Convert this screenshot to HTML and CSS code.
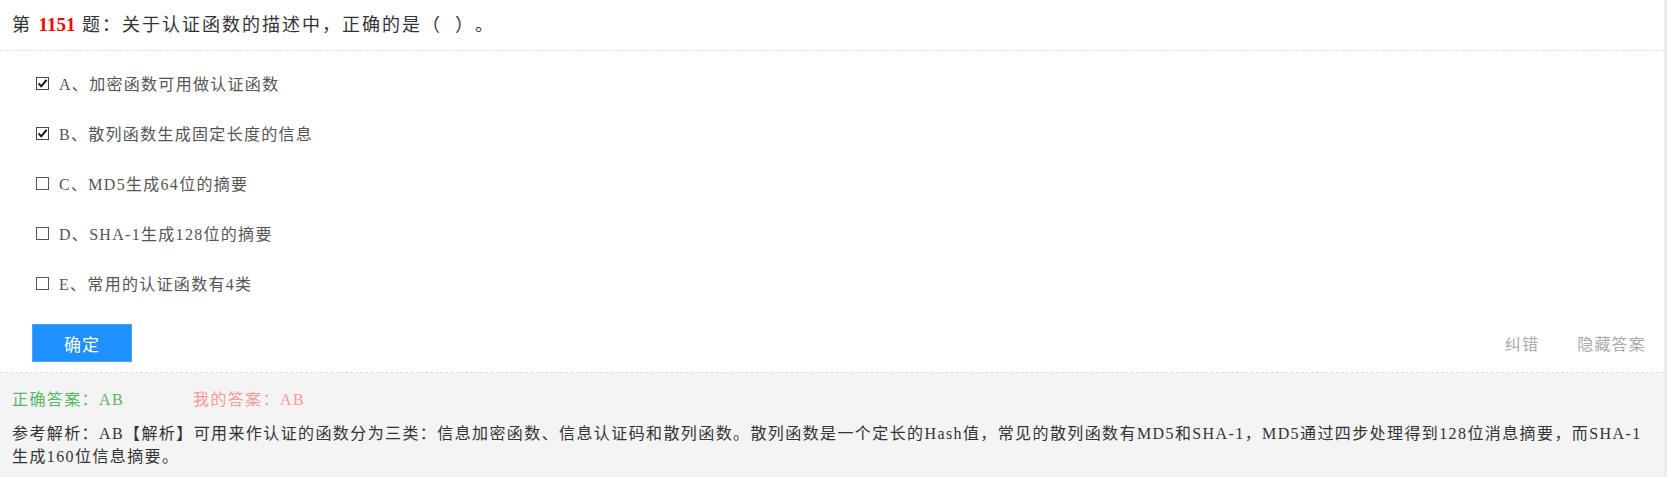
FILE: index.html
```html
<!DOCTYPE html>
<html lang="zh-CN">
<head>
<meta charset="utf-8">
<title>第 1151 题</title>
<link rel="stylesheet" href="styles.css">
</head>
<body>
<div class="page">
  <div class="q-head">第 <span class="q-num">1151</span> 题：关于认证函数的描述中，正确的是（&nbsp;&nbsp;）。</div>
  <ul class="options">
    <li class="option"><span class="cb"><svg width="13" height="13" viewBox="0 0 13 13"><rect x="0.5" y="0.5" width="12" height="12" fill="#fff" stroke="#444"/><polyline points="2.6,6.4 5.2,9.3 10.6,2.8" fill="none" stroke="#111" stroke-width="2"/></svg></span><span class="opt-text">A、加密函数可用做认证函数</span></li>
    <li class="option"><span class="cb"><svg width="13" height="13" viewBox="0 0 13 13"><rect x="0.5" y="0.5" width="12" height="12" fill="#fff" stroke="#444"/><polyline points="2.6,6.4 5.2,9.3 10.6,2.8" fill="none" stroke="#111" stroke-width="2"/></svg></span><span class="opt-text">B、散列函数生成固定长度的信息</span></li>
    <li class="option"><span class="cb"><svg width="13" height="13" viewBox="0 0 13 13"><rect x="0.5" y="0.5" width="12" height="12" fill="#fff" stroke="#555"/></svg></span><span class="opt-text">C、MD5生成64位的摘要</span></li>
    <li class="option"><span class="cb"><svg width="13" height="13" viewBox="0 0 13 13"><rect x="0.5" y="0.5" width="12" height="12" fill="#fff" stroke="#555"/></svg></span><span class="opt-text">D、SHA-1生成128位的摘要</span></li>
    <li class="option"><span class="cb"><svg width="13" height="13" viewBox="0 0 13 13"><rect x="0.5" y="0.5" width="12" height="12" fill="#fff" stroke="#555"/></svg></span><span class="opt-text">E、常用的认证函数有4类</span></li>
  </ul>
  <div class="actions">
    <button class="btn" type="button">确定</button>
    <div class="links"><a class="link">纠错</a><a class="link">隐藏答案</a></div>
  </div>
  <div class="answer">
    <div class="answer-row"><span class="right-ans">正确答案：AB</span><span class="my-ans">我的答案：AB</span></div>
    <div class="analysis">参考解析：AB【解析】可用来作认证的函数分为三类：信息加密函数、信息认证码和散列函数。散列函数是一个定长的Hash值，常见的散列函数有MD5和SHA-1，MD5通过四步处理得到128位消息摘要，而SHA-1生成160位信息摘要。</div>
  </div>
</div>
</body>
</html>
```
FILE: styles.css
```css
html, body {
  margin: 0;
  padding: 0;
}
body {
  background: #ececec;
  font-family: "Liberation Serif", "Noto Sans CJK SC", serif;
  color: #333;
  text-spacing-trim: space-all;
}
.page {
  width: 1664px;
  background: #fff;
  min-height: 100vh;
  display: flex;
  flex-direction: column;
}
.q-head {
  height: 50px;
  line-height: 50px;
  padding-left: 12px;
  font-size: 18px;
  letter-spacing: 2px;
  color: #333;
  border-bottom: 1px dashed #dcdcdc;
  white-space: nowrap;
}
.q-num {
  color: #ff0000;
  font-weight: bold;
  font-size: 19px;
  letter-spacing: 0;
}
.options {
  list-style: none;
  margin: 0;
  padding: 7px 0 0 36px;
}
.option {
  height: 50px;
  display: flex;
  align-items: center;
}
.cb {
  width: 13px;
  height: 13px;
  display: flex;
  margin-top: 1px;
}
.opt-text {
  margin-left: 10px;
  font-size: 16px;
  letter-spacing: 1.3px;
  color: #555;
}
.actions {
  display: flex;
  justify-content: space-between;
  align-items: center;
  padding: 16px 18px 10px 32px;
  border-bottom: 1px dashed #dcdcdc;
}
.btn {
  width: 100px;
  height: 38px;
  border: 1px solid #4aa3ff;
  background: #1e90ff;
  color: #fff;
  font-family: "Noto Sans CJK SC", sans-serif;
  font-size: 17px;
  letter-spacing: 1px;
  padding: 0;
  cursor: pointer;
}
.links {
  display: flex;
  gap: 38px;
}
.link {
  font-family: "Noto Sans CJK SC", sans-serif;
  font-size: 16px;
  letter-spacing: 1.2px;
  color: #aaa;
  cursor: pointer;
}
.answer {
  flex: 1;
  background: #f4f4f4;
  padding: 16px 12px 10px;
}
.answer-row {
  display: flex;
  gap: 69px;
  line-height: 22px;
  font-size: 16px;
  letter-spacing: 1.4px;
}
.right-ans {
  color: #55b865;
}
.my-ans {
  color: #ff9898;
}
.analysis {
  margin-top: 11px;
  font-size: 16px;
  line-height: 23px;
  letter-spacing: 1.4px;
  color: #333;
}
```
